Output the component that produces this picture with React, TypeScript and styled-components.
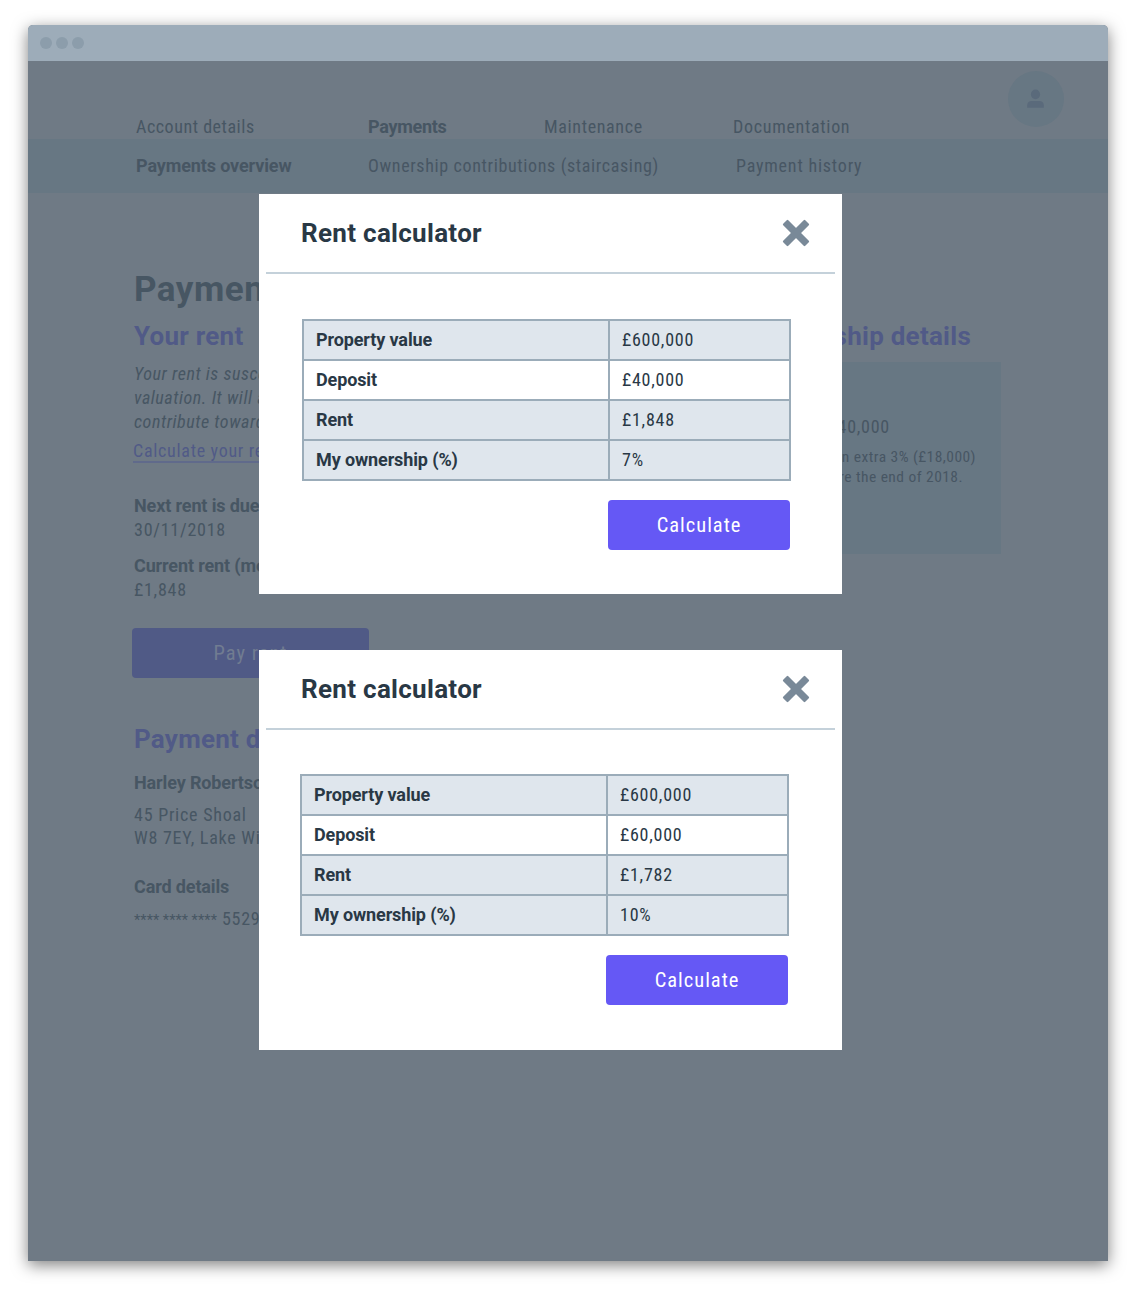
import React from "react";
import styled, { createGlobalStyle } from "styled-components";

const color = {
  ink: "#293845",
  slate: "#798998",
  line: "#9bacb9",
  rule: "#c4d1da",
  stripe: "#dfe6ed",
  accent: "#6558f5",
  page: "#6f7a85",
  panel: "#677783",
  dimInk: "#475663",
  dimAccent: "#515a87",
  bar: "#9dacb9",
};

const GlobalStyle = createGlobalStyle`
  body {
    margin: 0;
    background: #ffffff;
    font-family: Roboto, "Liberation Sans", sans-serif;
    font-size: 18px;
    font-stretch: 75%;
    letter-spacing: 0.75px;
  }
  * { box-sizing: border-box; }
`;

const Stage = styled.div`
  height: 1292px;
  padding: 25px 28px 31px;
  overflow: hidden;
`;

const Window = styled.div`
  position: relative;
  height: 1236px;
  border-radius: 5px 5px 0 0;
  background: ${color.page};
  box-shadow: 0 4px 16px rgba(0, 0, 0, 0.5);
`;

const TitleBar = styled.div`
  display: flex;
  align-items: center;
  gap: 4px;
  height: 36px;
  padding-left: 12px;
  border-radius: 5px 5px 0 0;
  background: ${color.bar};
`;

const Dot = styled.span`
  width: 12px;
  height: 12px;
  border-radius: 50%;
  background: #8c9dab;
`;

const Header = styled.header`
  display: flex;
  justify-content: space-between;
  height: 78px;
  padding: 10px 44px 0 108px;
`;

const Nav = styled.nav<{ $columns: string }>`
  display: grid;
  grid-template-columns: ${(p) => p.$columns};
  align-items: center;
  height: 24px;
  color: ${color.dimInk};
  white-space: nowrap;
`;

const MainNav = styled(Nav)`
  margin-top: 44px;
`;

const NavItem = styled.a<{ $active?: boolean; $tracking: number }>`
  font-weight: ${(p) => (p.$active ? 700 : 400)};
  font-stretch: ${(p) => (p.$active ? "100%" : "75%")};
  letter-spacing: ${(p) => p.$tracking}px;
  line-height: 24px;
`;

const SubBar = styled.div`
  height: 54px;
  padding: 15px 0 0 108px;
  background: ${color.panel};
`;

const Avatar = styled.div`
  display: flex;
  align-items: center;
  justify-content: center;
  width: 56px;
  height: 56px;
  border-radius: 50%;
  background: ${color.panel};
`;

const Content = styled.main`
  display: grid;
  grid-template-columns: 434px 433px;
  padding: 76px 0 0 106px;
  color: ${color.dimInk};
  white-space: nowrap;
`;

const Title = styled.h1`
  height: 40px;
  margin: 0;
  padding-top: 1px;
  font-size: 35px;
  font-stretch: 100%;
  font-weight: 700;
  letter-spacing: 0.5px;
  line-height: 40px;
`;

const Heading = styled.h2<{ $top: number }>`
  height: 32px;
  margin: ${(p) => p.$top}px 0 0;
  color: ${color.dimAccent};
  font-size: 26px;
  font-stretch: 100%;
  font-weight: 700;
  letter-spacing: 0.25px;
  line-height: 32px;
`;

const Intro = styled.p`
  margin: 10px 0 6px;
  font-style: italic;
  letter-spacing: 0.55px;
  line-height: 24px;
`;

const CalcLink = styled.a`
  display: inline-block;
  height: 23px;
  margin-left: -1px;
  border-bottom: 2px solid #606a8b;
  color: ${color.dimAccent};
  letter-spacing: 0.7px;
  line-height: 21px;
`;

const Field = styled.div<{ $top: number }>`
  margin-top: ${(p) => p.$top}px;
  line-height: 24px;
`;

const Label = styled.div`
  font-stretch: 100%;
  font-weight: 700;
  letter-spacing: -0.13px;
`;

const Value = styled.div<{ $top?: number; $line?: number }>`
  margin-top: ${(p) => p.$top ?? 0}px;
  line-height: ${(p) => p.$line ?? 24}px;
`;

const Mask = styled.span`
  font-size: 14.5px;
  letter-spacing: 0.1px;
`;

const Button = styled.button`
  display: flex;
  align-items: center;
  justify-content: center;
  width: 182px;
  height: 50px;
  padding: 0;
  border: 0;
  border-radius: 4px;
  background: ${color.accent};
  color: #ffffff;
  font-family: inherit;
  font-stretch: 75%;
  font-size: 20.5px;
  letter-spacing: 1px;
`;

const PayButton = styled(Button)`
  width: 237px;
  margin: 26px 0 0 -2px;
  background: #505a86;
  color: #717c91;
`;

const Side = styled.section`
  display: flex;
  flex-direction: column;
  align-items: stretch;
  text-align: right;
`;

const SideHeading = styled(Heading)`
  padding-right: 30px;
`;

const SideCard = styled.div`
  height: 192px;
  margin-top: 10px;
  padding-top: 53px;
  background: ${color.panel};
`;

const Amount = styled.div`
  padding-right: 111px;
  line-height: 24px;
`;

const Note = styled.div`
  margin-top: 8px;
  font-size: 15.5px;
  letter-spacing: 0.45px;
  line-height: 20px;
`;

const NoteLine = styled.div<{ $inset: number }>`
  padding-right: ${(p) => p.$inset}px;
`;

const Modal = styled.section<{ $top: number }>`
  position: absolute;
  top: ${(p) => p.$top}px;
  left: 231px;
  width: 583px;
  height: 400px;
  background: #ffffff;
  color: ${color.ink};
  white-space: nowrap;
`;

const ModalHead = styled.div`
  display: flex;
  align-items: center;
  justify-content: space-between;
  height: 80px;
  margin: 0 7px;
  padding: 0 25px 0 35px;
  border-bottom: 2px solid ${color.rule};
`;

const ModalTitle = styled.h2`
  margin: 0;
  font-size: 26px;
  font-stretch: 100%;
  font-weight: 700;
  letter-spacing: 0.3px;
  line-height: 32px;
`;

const Close = styled.button`
  display: flex;
  padding: 0;
  border: 0;
  background: none;
`;

const ModalBody = styled.div<{ $left: number; $top: number }>`
  width: 489px;
  margin: ${(p) => p.$top}px 0 0 ${(p) => p.$left}px;
`;

const Table = styled.div`
  display: grid;
  gap: 2px;
  padding: 2px;
  background: ${color.line};
`;

const Row = styled.div`
  display: grid;
  grid-template-columns: 304px 179px;
  gap: 2px;
  height: 38px;
  line-height: 38px;
`;

const Cell = styled.div<{ $plain?: boolean }>`
  padding-left: 12px;
  background: ${(p) => (p.$plain ? "#ffffff" : color.stripe)};
`;

const LabelCell = styled(Cell)`
  font-stretch: 100%;
  font-weight: 700;
  letter-spacing: -0.12px;
`;

const Actions = styled.div`
  display: flex;
  justify-content: flex-end;
  margin-top: 19px;
  padding-right: 1px;
`;

const CloseIcon = () => (
  <svg width="28" height="28" viewBox="-14 -14 28 28" fill={color.slate}>
    <rect x="-15.6" y="-3.6" width="31.2" height="7.2" rx="1.1" transform="rotate(45)" />
    <rect x="-15.6" y="-3.6" width="31.2" height="7.2" rx="1.1" transform="rotate(-45)" />
  </svg>
);

const PersonIcon = () => (
  <svg width="18" height="20" viewBox="0 0 18 20" fill="#5a6a7b">
    <ellipse cx="8.5" cy="5.4" rx="4.6" ry="4.8" />
    <path d="M0.2 18.8v-2.6C0.2 13.6 2.2 12 4.6 12h7.8c2.4 0 4.4 1.6 4.4 4.2V18.8z" />
  </svg>
);

type Figures = [string, string][];

const RentModal = ({ top, left, bodyTop, rows }: { top: number; left: number; bodyTop: number; rows: Figures }) => (
  <Modal $top={top}>
    <ModalHead>
      <ModalTitle>Rent calculator</ModalTitle>
      <Close aria-label="Close"><CloseIcon /></Close>
    </ModalHead>
    <ModalBody $left={left} $top={bodyTop}>
      <Table>
        {rows.map(([label, value], i) => (
          <Row key={label}>
            <LabelCell $plain={i === 1}>{label}</LabelCell>
            <Cell $plain={i === 1}>{value}</Cell>
          </Row>
        ))}
      </Table>
      <Actions><Button>Calculate</Button></Actions>
    </ModalBody>
  </Modal>
);

export default function App() {
  return (
    <>
      <GlobalStyle />
      <Stage>
        <Window>
          <TitleBar><Dot /><Dot /><Dot /></TitleBar>
          <Header>
            <MainNav $columns="232px 176px 189px auto">
              <NavItem $tracking={0.53}>Account details</NavItem>
              <NavItem $active $tracking={-0.3}>Payments</NavItem>
              <NavItem $tracking={0.65}>Maintenance</NavItem>
              <NavItem $tracking={0.7}>Documentation</NavItem>
            </MainNav>
            <Avatar><PersonIcon /></Avatar>
          </Header>
          <SubBar>
            <Nav $columns="232px 368px auto">
              <NavItem $active $tracking={-0.12}>Payments overview</NavItem>
              <NavItem $tracking={0.64}>Ownership contributions (staircasing)</NavItem>
              <NavItem $tracking={0.8}>Payment history</NavItem>
            </Nav>
          </SubBar>
          <Content>
            <section>
              <Title>Payments</Title>
              <Heading $top={11}>Your rent</Heading>
              <Intro>
                Your rent is susceptible<br />
                valuation. It will also<br />
                contribute towards
              </Intro>
              <CalcLink>Calculate your rent</CalcLink>
              <Field $top={31}>
                <Label>Next rent is due</Label>
                <Value>30/11/2018</Value>
              </Field>
              <Field $top={12}>
                <Label>Current rent (monthly)</Label>
                <Value>£1,848</Value>
              </Field>
              <PayButton>Pay rent</PayButton>
              <Heading $top={45}>Payment details</Heading>
              <Field $top={16}>
                <Label>Harley Robertson</Label>
                <Value $top={8} $line={23}>45 Price Shoal<br />W8 7EY, Lake Wi</Value>
              </Field>
              <Field $top={26}>
                <Label>Card details</Label>
                <Value $top={8}><Mask>**** **** ****</Mask> 5529</Value>
              </Field>
            </section>
            <Side>
              <SideHeading $top={51}>Ownership details</SideHeading>
              <SideCard>
                <Amount>£40,000</Amount>
                <Note>
                  <NoteLine $inset={25}>an extra 3% (£18,000)</NoteLine>
                  <NoteLine $inset={38}>before the end of 2018.</NoteLine>
                </Note>
              </SideCard>
            </Side>
          </Content>
          <RentModal
            top={169}
            left={43}
            bodyTop={45}
            rows={[["Property value", "£600,000"], ["Deposit", "£40,000"], ["Rent", "£1,848"], ["My ownership (%)", "7%"]]}
          />
          <RentModal
            top={625}
            left={41}
            bodyTop={44}
            rows={[["Property value", "£600,000"], ["Deposit", "£60,000"], ["Rent", "£1,782"], ["My ownership (%)", "10%"]]}
          />
        </Window>
      </Stage>
    </>
  );
}
